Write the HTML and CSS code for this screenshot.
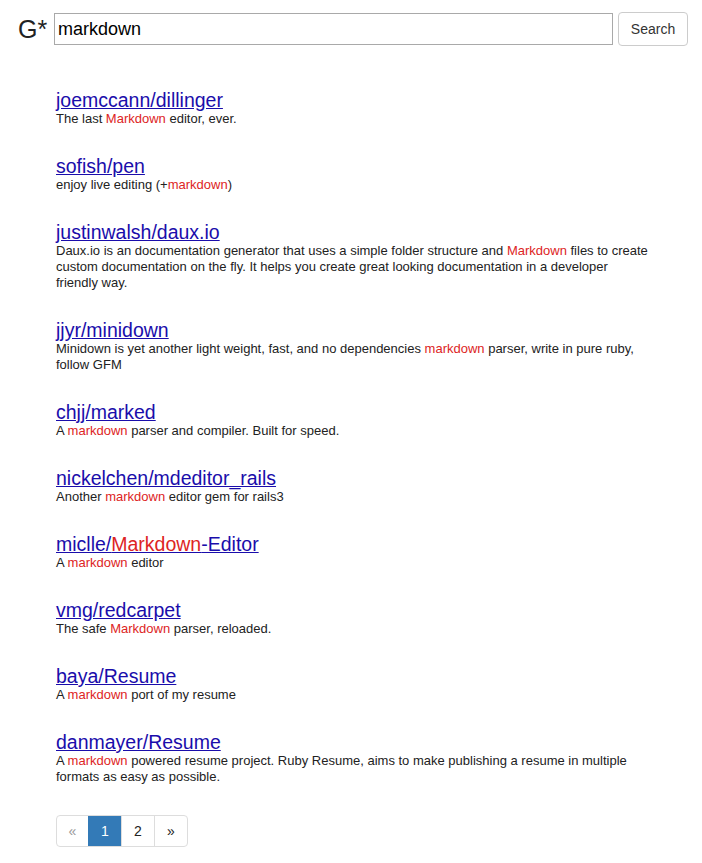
FILE: index.html
```html
<!DOCTYPE html>
<html>
<head>
<meta charset="utf-8">
<link rel="stylesheet" href="styles.css">
</head>
<body>
<header class="bar">
  <span class="logo">G*</span>
  <input class="query" type="text" value="markdown">
  <button class="btn">Search</button>
</header>
<main class="results">
  <div class="result">
    <a class="title" href="#">joemccann/dillinger</a>
    <p class="desc">The last <em>Markdown</em> editor, ever.</p>
  </div>
  <div class="result">
    <a class="title" href="#">sofish/pen</a>
    <p class="desc">enjoy live editing (+<em>markdown</em>)</p>
  </div>
  <div class="result">
    <a class="title" href="#">justinwalsh/daux.io</a>
    <p class="desc">Daux.io is an documentation generator that uses a simple folder structure and <em>Markdown</em> files to create custom documentation on the fly. It helps you create great looking documentation in a developer friendly way.</p>
  </div>
  <div class="result">
    <a class="title" href="#">jjyr/minidown</a>
    <p class="desc">Minidown is yet another light weight, fast, and no dependencies <em>markdown</em> parser, write in pure ruby, follow GFM</p>
  </div>
  <div class="result">
    <a class="title" href="#">chjj/marked</a>
    <p class="desc">A <em>markdown</em> parser and compiler. Built for speed.</p>
  </div>
  <div class="result">
    <a class="title" href="#">nickelchen/mdeditor_rails</a>
    <p class="desc">Another <em>markdown</em> editor gem for rails3</p>
  </div>
  <div class="result">
    <a class="title" href="#">miclle/<em>Markdown</em>-Editor</a>
    <p class="desc">A <em>markdown</em> editor</p>
  </div>
  <div class="result">
    <a class="title" href="#">vmg/redcarpet</a>
    <p class="desc">The safe <em>Markdown</em> parser, reloaded.</p>
  </div>
  <div class="result">
    <a class="title" href="#">baya/Resume</a>
    <p class="desc">A <em>markdown</em> port of my resume</p>
  </div>
  <div class="result">
    <a class="title" href="#">danmayer/Resume</a>
    <p class="desc">A <em>markdown</em> powered resume project. Ruby Resume, aims to make publishing a resume in multiple formats as easy as possible.</p>
  </div>
  <nav class="pager">
    <span class="page muted">«</span>
    <span class="page active">1</span>
    <span class="page">2</span>
    <span class="page">»</span>
  </nav>
</main>
</body>
</html>
```
FILE: styles.css
```css
html, body {
  margin: 0;
  padding: 0;
  background: #fff;
  font-family: "Liberation Sans", Arial, sans-serif;
  color: #222;
}
.bar {
  display: flex;
  align-items: center;
  padding: 12px 14px 0 18px;
  height: 34px;
}
.logo {
  font-size: 25px;
  color: #222;
  width: 36px;
  line-height: 34px;
}
.query {
  box-sizing: border-box;
  width: 560px;
  height: 32px;
  border: 1px solid #a9a9a9;
  padding: 0 3px;
  font-family: "Liberation Sans", Arial, sans-serif;
  font-size: 18px;
  color: #000;
  margin: 0;
}
.btn {
  box-sizing: border-box;
  margin-left: 5px;
  width: 70px;
  height: 34px;
  border: 1px solid #ccc;
  border-radius: 4px;
  background: #fff;
  font-family: "Liberation Sans", Arial, sans-serif;
  font-size: 14px;
  color: #333;
}
.results {
  padding: 43px 0 0 56px;
  width: 594px;
}
.result {
  margin-bottom: 28px;
}
.title {
  display: inline-block;
  font-size: 19.5px;
  line-height: 22px;
  color: #1a0dab;
  text-decoration: underline;
}
em {
  font-style: normal;
  color: #dd2424;
}
.desc {
  margin: 0;
  font-size: 13px;
  line-height: 16px;
  color: #222;
}
.pager {
  display: inline-flex;
  margin-top: 2px;
  border: 1px solid #ddd;
  border-radius: 4px;
  overflow: hidden;
}
.page {
  width: 32px;
  height: 30px;
  display: flex;
  align-items: center;
  justify-content: center;
  font-size: 14px;
  color: #222;
  border-left: 1px solid #ddd;
}
.page:first-child { border-left: none; width: 31px; }
.page.muted { color: #999; }
.page.active {
  background: #337ab7;
  color: #fff;
  border-left-color: #337ab7;
}
```
